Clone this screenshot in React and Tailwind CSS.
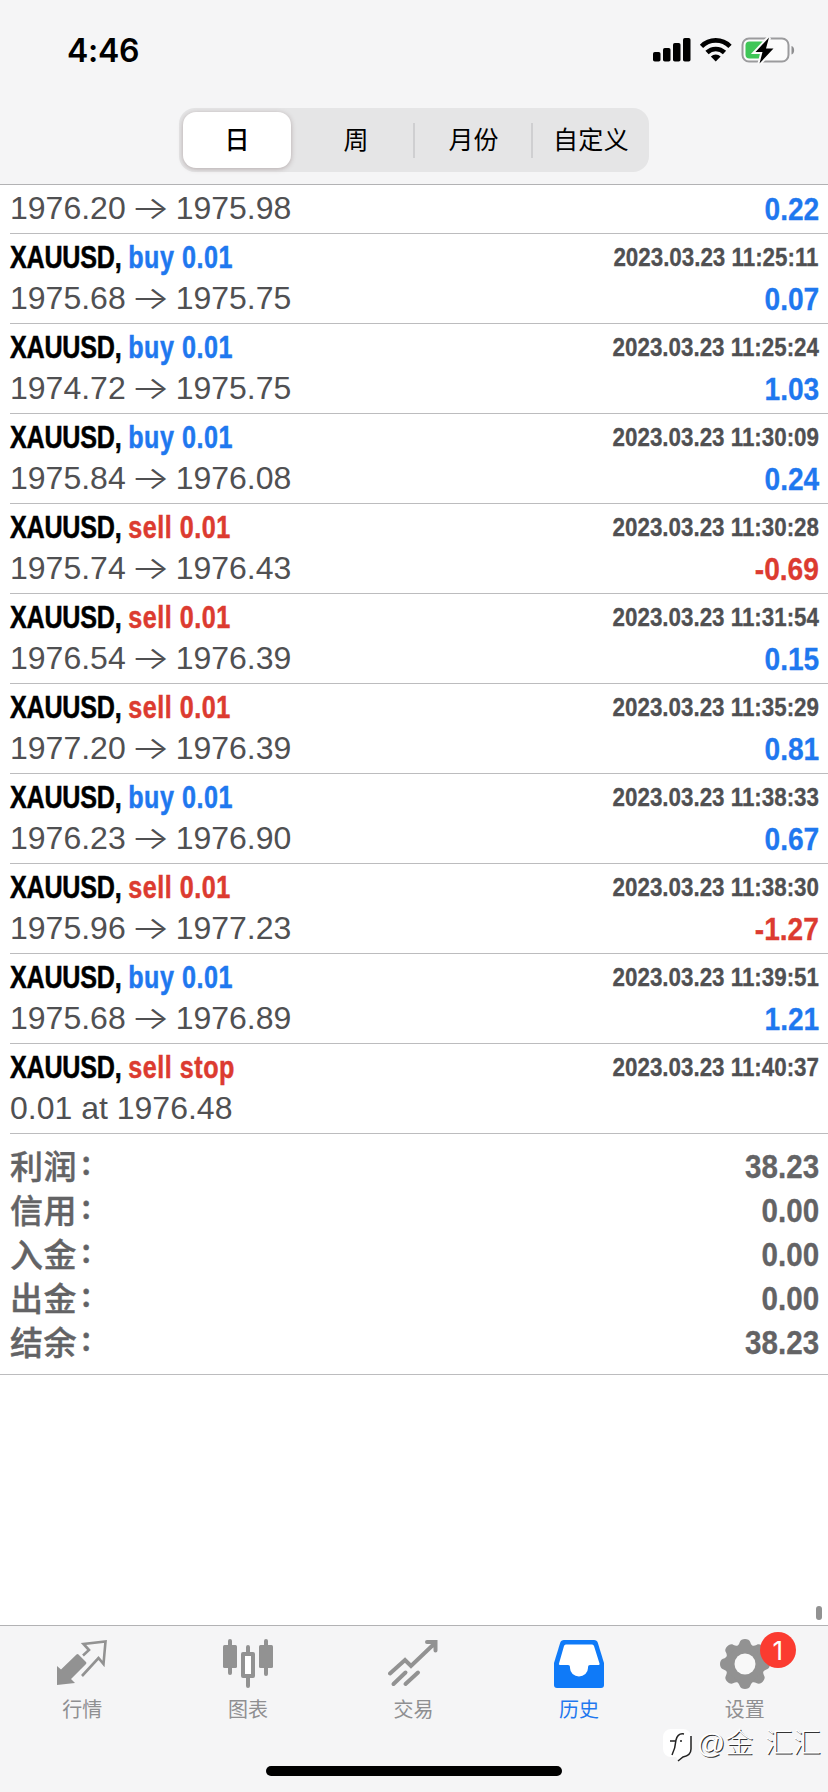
const history = [
  { type: 'buy 0.01', time: '2023.03.23 11:25:11', open: '1975.68', close: '1975.75', profit: '0.07' },
  { type: 'buy 0.01', time: '2023.03.23 11:25:24', open: '1974.72', close: '1975.75', profit: '1.03' },
  { type: 'buy 0.01', time: '2023.03.23 11:30:09', open: '1975.84', close: '1976.08', profit: '0.24' },
  { type: 'sell 0.01', time: '2023.03.23 11:30:28', open: '1975.74', close: '1976.43', profit: '-0.69' },
  { type: 'sell 0.01', time: '2023.03.23 11:31:54', open: '1976.54', close: '1976.39', profit: '0.15' },
  { type: 'sell 0.01', time: '2023.03.23 11:35:29', open: '1977.20', close: '1976.39', profit: '0.81' },
  { type: 'buy 0.01', time: '2023.03.23 11:38:33', open: '1976.23', close: '1976.90', profit: '0.67' },
  { type: 'sell 0.01', time: '2023.03.23 11:38:30', open: '1975.96', close: '1977.23', profit: '-1.27' },
  { type: 'buy 0.01', time: '2023.03.23 11:39:51', open: '1975.68', close: '1976.89', profit: '1.21' },
  { type: 'sell stop', time: '2023.03.23 11:40:37', note: '0.01 at 1976.48' },
];

const summary = [
  ['利润', '38.23'],
  ['信用', '0.00'],
  ['入金', '0.00'],
  ['出金', '0.00'],
  ['结余', '38.23'],
];

function StatusBar() {
  return (
    <div className="flex h-[108px] items-start justify-between pt-[30px] pr-[32px] pl-[67px]">
      <span className="font-['Inter'] text-[32px] leading-[41px] font-semibold tracking-[-0.3px]">4:46</span>
      <div className="flex items-center pt-[7px]">
        <svg width="143" height="28" viewBox="0 0 143 28">
          <rect x="0" y="15" width="7.5" height="9.5" rx="1.8" />
          <rect x="10" y="11" width="7.5" height="13.5" rx="1.8" />
          <rect x="20" y="6" width="7.5" height="18.5" rx="1.8" />
          <rect x="30" y="1" width="7.5" height="23.5" rx="1.8" />
          <g fill="none" stroke="#000" strokeWidth="4.6">
            <path d="M48.5 9.3a20 20 0 0 1 28.5 0" />
            <path d="M54 15.5a12.5 12.5 0 0 1 17.5 0" />
          </g>
          <path d="M62.75 24.5l-4.9-5a7 7 0 0 1 9.8 0z" />
          <rect x="89.5" y="1.5" width="46" height="23" rx="6.5" fill="#fbfbfb" stroke="#9b9b9d" strokeWidth="2" />
          <path d="M138.5 9v8.5c3.5-1 3.5-7.5 0-8.5z" fill="#8e8e90" />
          <rect x="92.5" y="4.5" width="20" height="17" rx="4" fill="#3fc657" />
          <path d="M116 0.5l-13.5 14.5h7l-3 11.5 14-15h-7.5z" stroke="#fafafa" strokeWidth="4" paintOrder="stroke" />
        </svg>
      </div>
    </div>
  );
}

function Segments() {
  return (
    <div className="mx-auto flex h-[64px] w-[470px] items-center rounded-[16px] bg-[#e5e5e6] p-1 text-[25px]">
      <div className="flex h-[56px] w-[108px] items-center justify-center rounded-[13px] bg-white pt-px font-medium shadow-[0_1px_5px_rgba(90,60,60,0.35)]">日</div>
      <div className="ml-1 flex h-[35px] w-[120px] items-center justify-center border-r-2 border-[#cfcfd1] pt-px pl-1">周</div>
      <div className="flex h-[35px] w-[118px] items-center justify-center border-r-2 border-[#cfcfd1] pt-px pl-px">月份</div>
      <div className="flex flex-1 items-center justify-center pt-px pl-1 tracking-[0.3px]">自定义</div>
    </div>
  );
}

function Prices({ open, close }) {
  return (
    <span className="flex items-center text-[32px] leading-[41px] text-[#505052]">
      <span>{open}</span>
      <span className="flex w-[50px] justify-center">
        <span className="-mt-[2px] scale-x-[1.3] font-['Inter'] font-light">→</span>
      </span>
      <span>{close}</span>
    </span>
  );
}

function Profit({ value }) {
  return (
    <span
      className={`mt-[2px] origin-right translate-x-px scale-x-[0.88] text-[32px] font-bold [-webkit-text-stroke:0.3px_currentColor] ${value.startsWith('-') ? 'text-[#dc3b30]' : 'text-[#1f78ef]'}`}
    >
      {value}
    </span>
  );
}

function Deal({ deal }) {
  return (
    <li className="ml-[10px] h-[90px] border-b border-[#bcbcbe] pt-[2px] pr-[10px]">
      <div className="flex h-[41px] items-center justify-between font-bold">
        <span className="origin-left scale-x-[0.785] text-[32px] tracking-[-0.3px] whitespace-nowrap [-webkit-text-stroke:0.5px_currentColor]">
          XAUUSD,{' '}
          <span className={`tracking-[0.7px] ${deal.type.startsWith('sell') ? 'text-[#dc3b30]' : 'text-[#1f78ef]'}`}>{deal.type}</span>
        </span>
        <span className="mt-[2px] origin-right translate-x-px scale-x-[0.86] text-[26px] whitespace-nowrap text-[#505052] [-webkit-text-stroke:0.3px_currentColor]">
          {deal.time}
        </span>
      </div>
      <div className="flex h-[42px] items-center justify-between">
        {deal.note ? <span className="text-[32px] text-[#505052]">{deal.note}</span> : <Prices open={deal.open} close={deal.close} />}
        {deal.profit && <Profit value={deal.profit} />}
      </div>
    </li>
  );
}

function QuotesIcon() {
  return (
    <svg width="50" height="50" viewBox="0 0 50 50">
      <path d="M0 27l4 3.5L19.500 15.500a1.500 1.500 0 0 1 2 0l7.500 7.500a1.500 1.500 0 0 1 0 2L14 40l4 4L0 46z" fill="#929292" />
      <path d="M26 16.500l6-5.500-5.500-6L48.500 2.500l-2 22.500-5-6L25 37" fill="none" stroke="#929292" strokeWidth="2.6" />
    </svg>
  );
}

function ChartIcon() {
  return (
    <svg width="50" height="50" viewBox="0 0 50 50" fill="#929292">
      <rect x="5" y="0" width="4" height="36" rx="2" />
      <rect x="0" y="6" width="14" height="23" rx="1.5" />
      <rect x="41" y="0" width="4" height="37" rx="2" />
      <rect x="36" y="6" width="14" height="23" rx="1.5" />
      <path d="M25 8v7M25 39v8" stroke="#929292" strokeWidth="4" strokeLinecap="round" />
      <rect x="20" y="15" width="10" height="22" fill="#fff" stroke="#929292" strokeWidth="4" strokeLinejoin="round" />
    </svg>
  );
}

function TradeIcon() {
  return (
    <svg width="50" height="50" viewBox="0 0 50 50" fill="none" stroke="#929292" strokeWidth="4" strokeLinecap="round">
      <path d="M2 34.5L17 21l6 6L46 5M39 3h8.500v8.500" />
      <path d="M5.500 45l12-11.500M17.500 45l12.500-11.500" />
    </svg>
  );
}

function HistoryIcon() {
  return (
    <svg width="50" height="50" viewBox="0 0 50 50">
      <path d="M10 1h30a4 4 0 0 1 3.800 2.800L50 24v22a3 3 0 0 1-3 3H3a3 3 0 0 1-3-3V24L6.200 3.800A4 4 0 0 1 10 1z" fill="#0f7af8" />
      <path d="M12 5.500h26a2 2 0 0 1 2 1.500l5.500 17.500a1 1 0 0 1-1 1.500H36a2 2 0 0 0-2 2v1a9 8.500 0 0 1-18 0v-1a2 2 0 0 0-2-2H6a1 1 0 0 1-1-1.500L10 7a2 2 0 0 1 2-1.500z" fill="#fff" />
    </svg>
  );
}

function SettingsIcon() {
  return (
    <svg width="50" height="50" viewBox="-25 -25 50 50" fill="#929292">
      <circle r="19.5" />
      {[0, 45, 90, 135, 180, 225, 270, 315].map((a) => (
        <path key={a} d="M-9-17C-7-18.500-6-19.500-5.200-22C-4.300-26 4.300-26 5.200-22C6-19.500 7-18.500 9-17z" transform={`rotate(${a})`} />
      ))}
      <circle r="10.5" fill="#f8f8f8" />
    </svg>
  );
}

const tabs = [
  { label: '行情', Icon: QuotesIcon },
  { label: '图表', Icon: ChartIcon },
  { label: '交易', Icon: TradeIcon },
  { label: '历史', Icon: HistoryIcon, active: true },
  { label: '设置', Icon: SettingsIcon, badge: 1 },
];

function TabBar() {
  return (
    <nav className="relative h-[167px] border-t border-[#b2b2b4] bg-[#f5f5f6]">
      <div className="flex">
        {tabs.map(({ label, Icon, active, badge }) => (
          <div key={label} className={`flex flex-1 flex-col items-center pt-[13px] text-[20px] ${active ? 'text-[#1f78ef]' : 'text-[#8f8f91]'}`}>
            <span className="relative mr-px">
              <Icon />
              {badge && (
                <span className="absolute -top-[7px] left-[40px] flex size-[36px] items-center justify-center rounded-full bg-[#fb3b30] font-['Inter'] text-[26px] text-white">
                  {badge}
                </span>
              )}
            </span>
            <span className="mt-[6px] mr-px leading-[30px]">{label}</span>
          </div>
        ))}
      </div>
      <div className="absolute top-[140px] left-[266px] h-[10px] w-[296px] rounded-full bg-black" />
      <div className="absolute top-[98px] right-[7px] flex items-center text-[28px] leading-[40px] font-light [word-spacing:4px] whitespace-pre text-white [text-shadow:1px_1px_0_#333]">
        <svg width="32" height="36" viewBox="0 0 32 36" className="mr-[3px]">
          <path d="M9 3h12a8 8 0 0 1 8 8v12c0 5-3 7-8 8l-4 4-3-4H9a8 8 0 0 1-8-8V11a8 8 0 0 1 8-8z" fill="#fff" />
          <path d="M22 8c-5-1-7 2-8 6-.5 6-2 11-4 15M8 15h6M18 15h2M29 10v13c0 5-3 7-8 8l-5 4" fill="none" stroke="#222" strokeWidth="1.5" />
        </svg>
        @金 汇汇
      </div>
    </nav>
  );
}

export default function App() {
  return (
    <div className="flex h-[1792px] w-[828px] flex-col overflow-hidden bg-white font-['Liberation_Sans','Noto_Sans_CJK_SC',sans-serif] text-black">
      <header className="h-[185px] shrink-0 border-b border-[#b2b2b4] bg-[#f5f5f6]">
        <StatusBar />
        <Segments />
      </header>

      <main className="relative flex-1">
        <div className="ml-[10px] flex h-[49px] items-center justify-between border-b border-[#bcbcbe] pr-[10px] pb-[2px]">
          <Prices open="1976.20" close="1975.98" />
          <Profit value="0.22" />
        </div>
        <ul>
          {history.map((deal) => (
            <Deal key={deal.time} deal={deal} />
          ))}
        </ul>
        <div className="flex h-[241px] flex-col border-b border-[#bcbcbe] pt-[10px] pr-[10px] pl-[10px]">
          {summary.map(([label, value]) => (
            <div key={label} className="flex h-[44px] items-center justify-between font-bold text-[#636365]">
              <span className="-mt-[3px] flex font-['Noto_Sans_CJK_SC'] text-[33px] leading-[42px] font-medium tracking-[0.6px] [-webkit-text-stroke:0.4px_currentColor]">
                {label}
                <span className="-mt-[4px] ml-[4px]">:</span>
              </span>
              <span className="origin-right translate-x-px scale-x-[0.87] text-[34px] leading-[44px] [-webkit-text-stroke:0.3px_currentColor]">{value}</span>
            </div>
          ))}
        </div>
        <div className="absolute right-[6px] bottom-[5px] h-[14px] w-[6px] rounded-full bg-[#929292]" />
      </main>

      <TabBar />
    </div>
  );
}
